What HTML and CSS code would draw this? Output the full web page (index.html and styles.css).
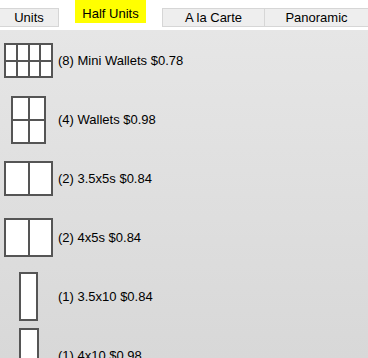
FILE: index.html
```html
<!DOCTYPE html>
<html>
<head>
<meta charset="utf-8">
<link rel="stylesheet" href="styles.css">
</head>
<body>
<div class="tabs">
  <div class="tab tab-units">Units</div>
  <div class="tab tab-active">Half Units</div>
  <div class="tab tab-wide">A la Carte</div>
  <div class="tab tab-wide tab-last">Panoramic</div>
</div>
<div class="content">
  <div class="row">
    <div class="slot"><div class="pic pic-mini"><i></i><i></i><i></i><i></i><i></i><i></i><i></i><i></i></div></div>
    <div class="label">(8) Mini Wallets $0.78</div>
  </div>
  <div class="row">
    <div class="slot"><div class="pic pic-wallet"><i></i><i></i><i></i><i></i></div></div>
    <div class="label">(4) Wallets $0.98</div>
  </div>
  <div class="row">
    <div class="slot"><div class="pic pic-35x5"><i></i><i></i></div></div>
    <div class="label">(2) 3.5x5s $0.84</div>
  </div>
  <div class="row">
    <div class="slot"><div class="pic pic-4x5"><i></i><i></i></div></div>
    <div class="label">(2) 4x5s $0.84</div>
  </div>
  <div class="row">
    <div class="slot"><div class="pic pic-35x10"><i></i></div></div>
    <div class="label">(1) 3.5x10 $0.84</div>
  </div>
  <div class="row">
    <div class="slot"><div class="pic pic-4x10"><i></i></div></div>
    <div class="label">(1) 4x10 $0.98</div>
  </div>
</div>
</body>
</html>
```
FILE: styles.css
```css
html, body {
  margin: 0;
  padding: 0;
  height: 358px;
  overflow: hidden;
  background: #ffffff;
  font-family: "Liberation Sans", Arial, sans-serif;
  font-size: 13px;
  color: #000;
}

.tabs {
  display: flex;
  align-items: flex-start;
  height: 30px;
  background: #ffffff;
}

.tab {
  box-sizing: border-box;
  text-align: center;
  color: #000;
}

.tab-units {
  width: 59px;
  height: 19px;
  margin-top: 8px;
  line-height: 17px;
  background: #eeeeee;
  border: 1px solid #d6d6d6;
  border-left: none;
}

.tab-active {
  width: 71px;
  height: 23px;
  margin-left: 16px;
  margin-right: 16px;
  padding-top: 5px;
  line-height: 17px;
  background: #ffff00;
}

.tab-wide {
  width: 103px;
  height: 19px;
  margin-top: 8px;
  line-height: 17px;
  background: #eeeeee;
  border: 1px solid #d6d6d6;
}

.tab-last {
  border-left: none;
  border-right: none;
}

.content {
  height: 328px;
  padding-top: 1px;
  box-sizing: border-box;
  background: linear-gradient(#e6e6e6, #d8d8d8);
}

.row {
  display: flex;
  align-items: center;
  height: 59px;
}

.slot {
  width: 57px;
  display: flex;
  justify-content: center;
  flex-shrink: 0;
}

.label {
  margin-left: 1px;
  white-space: nowrap;
}

.pic {
  box-sizing: border-box;
  display: grid;
  gap: 2px;
  padding: 2px;
  background: #555555;
}

.pic i {
  display: block;
  background: #ffffff;
}

.pic-mini {
  width: 49px;
  height: 35px;
  grid-template-columns: repeat(4, 1fr);
  grid-template-rows: repeat(2, 1fr);
}

.pic-wallet {
  width: 35px;
  height: 48px;
  grid-template-columns: repeat(2, 1fr);
  grid-template-rows: repeat(2, 1fr);
}

.pic-35x5 {
  width: 49px;
  height: 35px;
  grid-template-columns: repeat(2, 1fr);
}

.pic-4x5 {
  width: 49px;
  height: 39px;
  grid-template-columns: repeat(2, 1fr);
}

.pic-35x10 {
  width: 19px;
  height: 49px;
  grid-template-columns: 1fr;
}

.pic-4x10 {
  width: 20px;
  height: 56px;
  grid-template-columns: 1fr;
}
```
